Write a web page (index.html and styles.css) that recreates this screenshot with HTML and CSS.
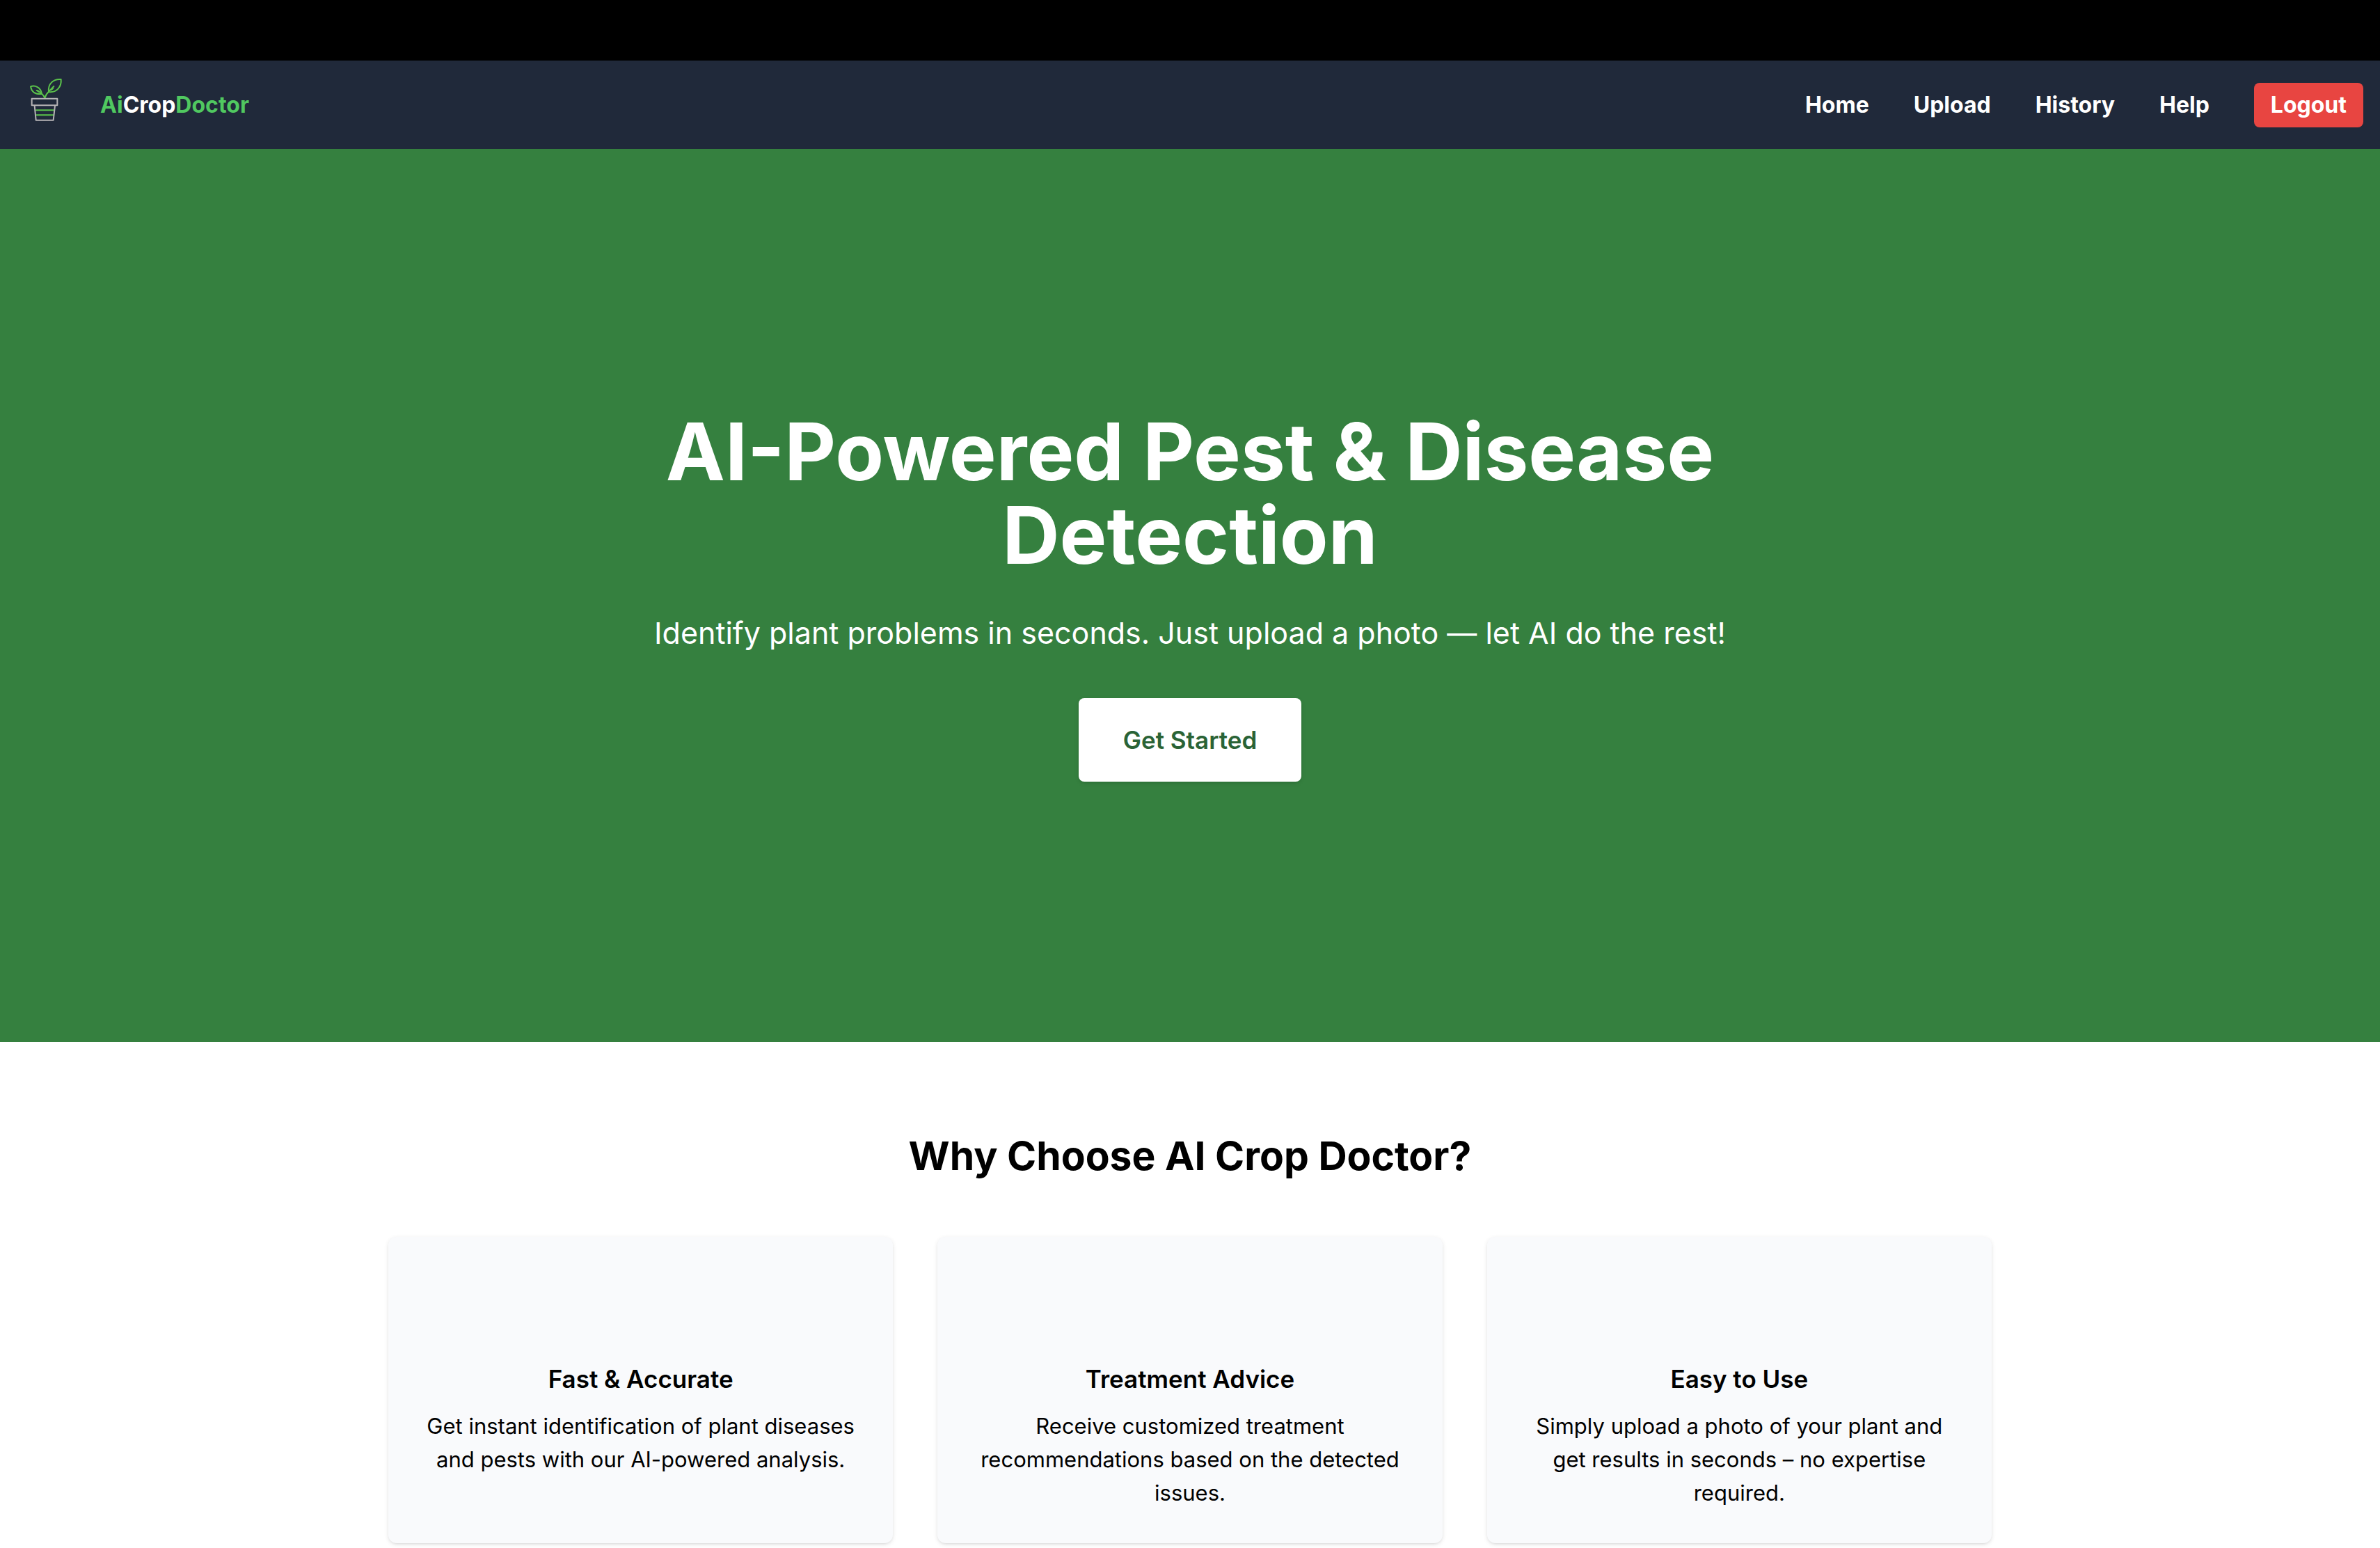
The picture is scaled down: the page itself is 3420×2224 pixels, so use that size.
FILE: index.html
```html
<!DOCTYPE html>
<html lang="en">
<head>
  <meta charset="utf-8">
  <meta name="viewport" content="width=device-width, initial-scale=1">
  <title>AiCropDoctor</title>
  <link rel="stylesheet" href="styles.css">
</head>
<body>
  <div class="top-strip"></div>
  <header class="navbar">
    <a class="brand" href="#">
      <svg class="brand-icon" viewBox="120 120 156 243" fill="none" stroke-width="6" stroke-linejoin="round" aria-hidden="true">
        <g stroke="#5bc24b" stroke-linecap="round">
          <path d="M132 163C150 156 176 165 180 195C158 197 137 190 132 163Z"/>
          <path d="M158 180L168 186M162 180L178 192Q188 200 193 213"/>
          <path d="M263 132C229 129 206 152 210 186C244 190 266 165 263 132Z"/>
          <path d="M232 162L210 185Q198 195 193 213M222 177L229 170"/>
          <path d="M156 265H231M157 286H229"/>
        </g>
        <g stroke="#b5b3b5">
          <path d="M137 215H247V244H137Z"/>
          <path d="M149 246L155 308H230L237 246"/>
        </g>
      </svg>
      <span class="brand-name">Ai<span class="brand-crop">Crop</span>Doctor</span>
    </a>
    <nav class="nav-links">
      <a href="#">Home</a>
      <a href="#">Upload</a>
      <a href="#">History</a>
      <a href="#">Help</a>
      <button class="logout" type="button">Logout</button>
    </nav>
  </header>
  <main>
    <section class="hero">
      <h1 class="hero-title">AI-Powered Pest &amp; Disease Detection</h1>
      <p class="hero-text">Identify plant problems in seconds. Just upload a photo — let AI do the rest!</p>
      <a class="cta" href="#">Get Started</a>
    </section>
    <section class="features">
      <h2 class="features-title">Why Choose AI Crop Doctor?</h2>
      <div class="cards">
        <article class="card">
          <h3 class="card-title">Fast &amp; Accurate</h3>
          <p class="card-text">Get instant identification of plant diseases and pests with our AI-powered analysis.</p>
        </article>
        <article class="card">
          <h3 class="card-title">Treatment Advice</h3>
          <p class="card-text">Receive customized treatment recommendations based on the detected issues.</p>
        </article>
        <article class="card">
          <h3 class="card-title">Easy to Use</h3>
          <p class="card-text">Simply upload a photo of your plant and get results in seconds – no expertise required.</p>
        </article>
      </div>
    </section>
  </main>
</body>
</html>
```

FILE: styles.css
```css
* {
  box-sizing: border-box;
}

body,
h1,
h2,
h3,
p {
  margin: 0;
}

body {
  background: #fff;
  color: #000;
  font-family: Inter, "Liberation Sans", sans-serif;
  font-size: 31px;
  line-height: 48px;
}

a {
  color: inherit;
  text-decoration: none;
}

.top-strip {
  height: 87px;
  background: #000;
}

.navbar {
  display: flex;
  align-items: center;
  justify-content: space-between;
  min-height: 127px;
  padding: 0 24px 0 40px;
  background: #20293a;
  color: #fff;
  font-size: 32px;
  font-weight: 700;
}

.brand {
  display: flex;
  align-items: center;
  gap: 52px;
}

.brand-icon {
  width: 52px;
  height: 81px;
}

.brand-name {
  color: #50c860;
}

.brand-crop {
  color: #fff;
}

.nav-links {
  display: flex;
  align-items: center;
  gap: 64px;
}

.logout {
  padding: 8px 24px;
  border: 0;
  border-radius: 8px;
  background: #e84541;
  color: #fff;
  font: inherit;
}

.hero {
  display: flex;
  flex-direction: column;
  align-items: center;
  justify-content: center;
  min-height: calc(60vh - 51px);
  padding: 0 48px;
  background: #35803f;
  color: #fff;
  text-align: center;
}

.hero-title {
  max-width: 1536px;
  margin-bottom: 48px;
  font-size: 114px;
  font-weight: 700;
  line-height: 120px;
}

.hero-text {
  margin-bottom: 62px;
  font-size: 43px;
  line-height: 64px;
}

.cta {
  padding: 32px 64px;
  border-radius: 8px;
  background: #fff;
  box-shadow: 0 2px 6px rgba(0, 0, 0, 0.1), 0 2px 4px -2px rgba(0, 0, 0, 0.1);
  color: #2a6336;
  font-size: 35px;
  font-weight: 600;
  line-height: 56px;
}

.features {
  padding: 128px 48px;
  text-align: center;
}

.features-title {
  margin-bottom: 80px;
  font-size: 57px;
  font-weight: 700;
  line-height: 72px;
}

.cards {
  display: grid;
  grid-template-columns: repeat(3, 1fr);
  gap: 64px;
  max-width: 2304px;
  margin: 0 auto;
}

.card {
  padding: 176px 48px 48px;
  border-radius: 12px;
  background: #f9fafc;
  box-shadow: 0 2px 6px rgba(0, 0, 0, 0.1), 0 2px 4px -2px rgba(0, 0, 0, 0.1);
}

.card-title {
  margin-bottom: 16px;
  font-size: 35px;
  font-weight: 600;
  line-height: 56px;
}
```
